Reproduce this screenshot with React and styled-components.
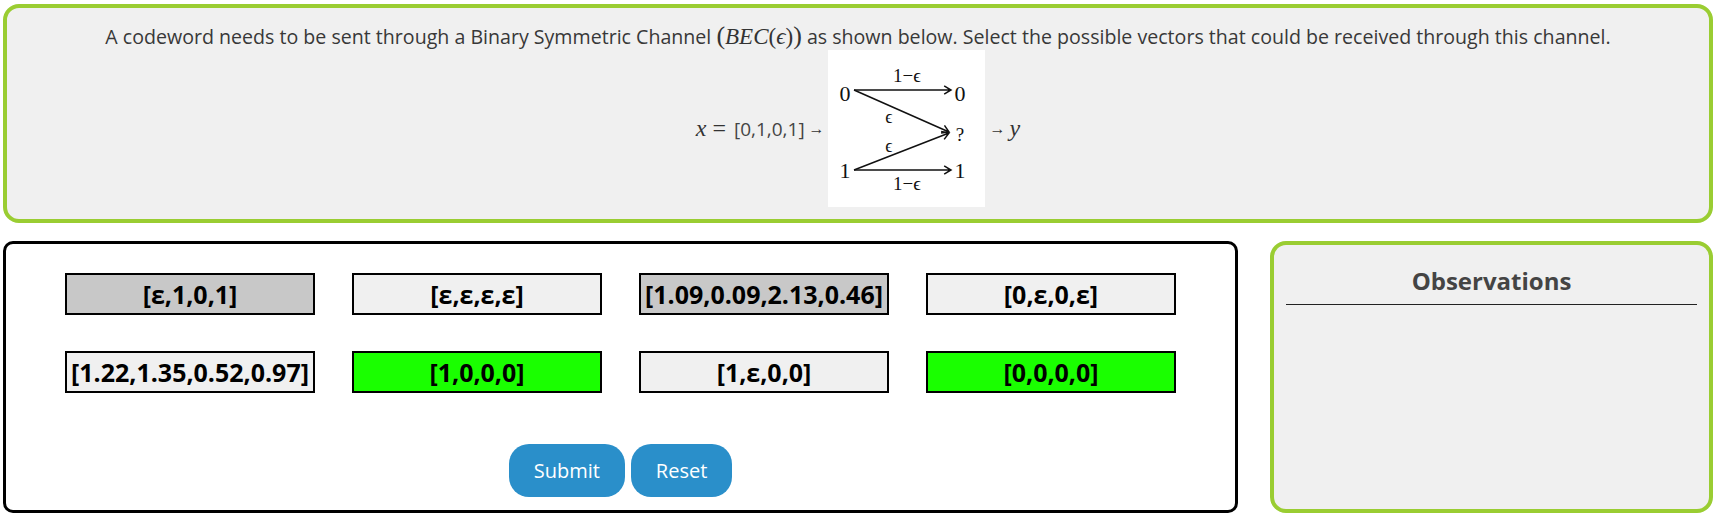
import styled, { createGlobalStyle } from "styled-components";

const GlobalStyle = createGlobalStyle`
  body {
    margin: 0;
    background: #fff;
    font-family: "Open Sans", "Noto Sans", sans-serif;
  }
`;

const Page = styled.div`
  display: flex;
  flex-direction: column;
  gap: 18px;
  padding: 4px 3px 5px;
`;

const TopPanel = styled.section`
  background: #f0f0f0;
  border: 4px solid #9acd32;
  border-radius: 16px;
  padding: 15px 20px 12px;
  text-align: center;
`;

const Question = styled.p`
  margin: 0;
  font-size: 19.6px;
  line-height: 26px;
  color: #383838;
`;

const Tex = styled.span`
  font-family: "Liberation Serif", "DejaVu Serif", serif;
  font-size: ${(p) => p.$size || 24}px;
  color: #333;
`;

const Var = styled.span`
  font-style: italic;
`;

const Paren = styled.span`
  font-size: 26px;
`;

const DiagramRow = styled.div`
  display: flex;
  align-items: center;
  justify-content: center;
  color: #444;
`;

const Arrow = styled.span`
  font-family: "Liberation Serif", "DejaVu Serif", serif;
  font-size: 16px;
  color: #333;
  margin: 0 ${(p) => p.$right ?? 3}px 0 ${(p) => p.$left ?? 3}px;
`;

const Vec = styled.span`
  font-size: 19px;
  margin-left: 8px;
`;

const Figure = styled.div`
  width: 157px;
  height: 157px;
  background: #fff;
  svg {
    display: block;
  }
`;

const BottomRow = styled.div`
  display: flex;
  gap: 32px;
  height: 272px;
`;

const Board = styled.section`
  flex: 1;
  background: #fff;
  border: 3px solid #000;
  border-radius: 10px;
  padding: 29px 0 12px;
  display: flex;
  flex-direction: column;
  align-items: center;
`;

const OptionGrid = styled.div`
  display: grid;
  grid-template-columns: repeat(4, 250px);
  grid-auto-rows: 42px;
  column-gap: 37px;
  row-gap: 36px;
`;

const optionBg = {
  idle: "#f0f0f0",
  picked: "#c8c8c8",
  right: "#1aff00",
};

const Option = styled.div`
  box-sizing: border-box;
  display: flex;
  align-items: center;
  justify-content: center;
  border: 2px solid #000;
  background: ${(p) => optionBg[p.$state]};
  font-size: 25px;
  font-weight: 700;
  color: #000;
  white-space: nowrap;
`;

const ButtonRow = styled.div`
  display: flex;
  gap: 6px;
  margin-top: 51px;
`;

const Button = styled.button`
  height: 53px;
  padding: 0 25px;
  border: none;
  border-radius: 20px;
  background: #2a8fca;
  color: #fff;
  font-family: inherit;
  font-size: 20px;
  cursor: pointer;
`;

const Notes = styled.aside`
  box-sizing: border-box;
  width: 443px;
  background: #f0f0f0;
  border: 4px solid #9acd32;
  border-radius: 16px;
  padding: 20px 12px;
`;

const NotesTitle = styled.h2`
  margin: 0;
  padding-bottom: 7px;
  border-bottom: 1px solid #222;
  text-align: center;
  font-size: 24px;
  line-height: 32px;
  font-weight: 700;
  color: #444;
`;

// line with a chevron head at its end
const head = (x1, y1, x2, y2) => {
  const a = Math.atan2(y2 - y1, x2 - x1);
  const l = 8;
  const s = 0.55;
  const p1 = [x2 - l * Math.cos(a - s), y2 - l * Math.sin(a - s)];
  const p2 = [x2 - l * Math.cos(a + s), y2 - l * Math.sin(a + s)];
  return `M${p1[0]},${p1[1]} L${x2},${y2} L${p2[0]},${p2[1]} M${x1},${y1} L${x2},${y2}`;
};

const Channel = () => (
  <svg width="157" height="157" viewBox="0 0 157 157">
    <g fill="none" stroke="#111" strokeWidth="1.5">
      <path d={head(26, 40, 123, 40)} />
      <path d={head(26, 40, 121, 82)} />
      <path d={head(26, 120, 121, 83)} />
      <path d={head(26, 120, 123, 120)} />
    </g>
    <g fontFamily="Liberation Serif, DejaVu Serif, serif" fill="#111" textAnchor="middle">
      <text x="17" y="51" fontSize="22">0</text>
      <text x="132" y="51" fontSize="22">0</text>
      <text x="132" y="91" fontSize="19">?</text>
      <text x="17" y="128" fontSize="22">1</text>
      <text x="132" y="128" fontSize="22">1</text>
      <text x="79" y="32" fontSize="19">1−ϵ</text>
      <text x="79" y="140" fontSize="19">1−ϵ</text>
      <text x="61" y="73" fontSize="18">ϵ</text>
      <text x="61" y="102" fontSize="18">ϵ</text>
    </g>
  </svg>
);

const options = [
  { label: "[ε,1,0,1]", state: "picked" },
  { label: "[ε,ε,ε,ε]", state: "idle" },
  { label: "[1.09,0.09,2.13,0.46]", state: "picked" },
  { label: "[0,ε,0,ε]", state: "idle" },
  { label: "[1.22,1.35,0.52,0.97]", state: "idle" },
  { label: "[1,0,0,0]", state: "right" },
  { label: "[1,ε,0,0]", state: "idle" },
  { label: "[0,0,0,0]", state: "right" },
];

export default function App() {
  return (
    <>
      <GlobalStyle />
      <Page>
        <TopPanel>
          <Question>
            A codeword needs to be sent through a Binary Symmetric Channel{" "}
            <Tex $size={23}>
              <Paren>(</Paren>
              <Var>BEC</Var>(<Var>ϵ</Var>)<Paren>)</Paren>
            </Tex>{" "}
            as shown below. Select the possible vectors that could be received through this channel.
          </Question>
          <DiagramRow>
            <Tex>
              <Var>x</Var> =
            </Tex>
            <Vec>[0,1,0,1]</Vec>
            <Arrow $left={4} $right={3}>→</Arrow>
            <Figure>
              <Channel />
            </Figure>
            <Arrow $left={5} $right={4}>→</Arrow>
            <Tex>
              <Var>y</Var>
            </Tex>
          </DiagramRow>
        </TopPanel>
        <BottomRow>
          <Board>
            <OptionGrid>
              {options.map((o) => (
                <Option key={o.label} $state={o.state}>
                  {o.label}
                </Option>
              ))}
            </OptionGrid>
            <ButtonRow>
              <Button>Submit</Button>
              <Button>Reset</Button>
            </ButtonRow>
          </Board>
          <Notes>
            <NotesTitle>Observations</NotesTitle>
          </Notes>
        </BottomRow>
      </Page>
    </>
  );
}
